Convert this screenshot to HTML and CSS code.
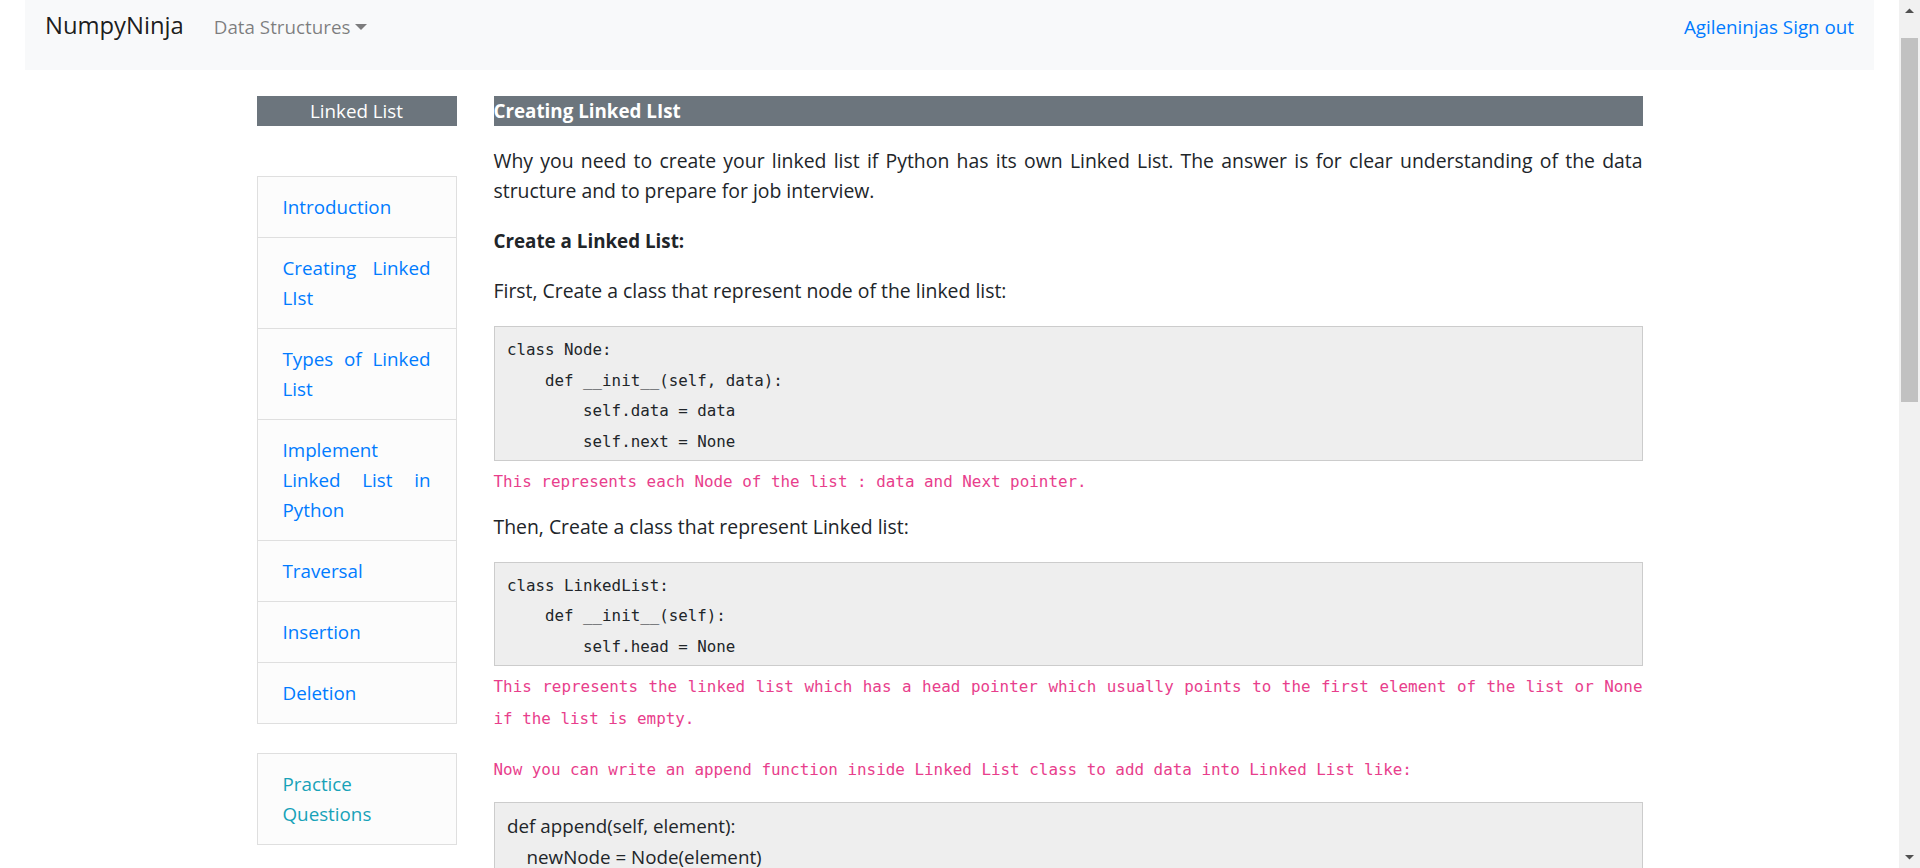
FILE: index.html
```html
<!DOCTYPE html>
<html lang="en">
<head>
<meta charset="utf-8">
<title>Creating Linked LIst</title>
<link rel="stylesheet" href="styles.css">
</head>
<body>
<div class="page">
  <nav class="navbar">
    <a class="brand" href="#">NumpyNinja</a>
    <a class="nav-link" href="#">Data Structures<span class="caret"></span></a>
    <a class="nav-user" href="#">Agileninjas Sign out</a>
  </nav>

  <div class="layout">
    <aside class="sidebar">
      <div class="side-title">Linked List</div>
      <ul class="list-group">
        <li class="list-item"><a href="#">Introduction</a></li>
        <li class="list-item"><a href="#">Creating Linked LIst</a></li>
        <li class="list-item"><a href="#">Types of Linked List</a></li>
        <li class="list-item"><a href="#">Implement Linked List in Python</a></li>
        <li class="list-item"><a href="#">Traversal</a></li>
        <li class="list-item"><a href="#">Insertion</a></li>
        <li class="list-item"><a href="#">Deletion</a></li>
      </ul>
      <ul class="list-group practice">
        <li class="list-item"><a href="#">Practice Questions</a></li>
      </ul>
    </aside>

    <main class="content">
      <h4 class="content-title">Creating Linked LIst</h4>
      <p class="text">Why you need to create your linked list if Python has its own Linked List. The answer is for clear understanding of the data structure and to prepare for job interview.</p>
      <p class="text strong">Create a Linked List:</p>
      <p class="text">First, Create a class that represent node of the linked list:</p>
      <div class="code-box"><div class="ln">class Node:</div><div class="ln">    def __init__(self, data):</div><div class="ln">        self.data = data</div><div class="ln">        self.next = None</div></div>
      <p class="note">This represents each Node of the list : data and Next pointer.</p>
      <p class="text">Then, Create a class that represent Linked list:</p>
      <div class="code-box"><div class="ln">class LinkedList:</div><div class="ln">    def __init__(self):</div><div class="ln">        self.head = None</div></div>
      <p class="note">This represents the linked list which has a head pointer which usually points to the first element of the list or None if the list is empty.</p>
      <p class="note note-lead">Now you can write an append function inside Linked List class to add data into Linked List like:</p>
      <div class="code-box code-prose"><div class="ln">def append(self, element):</div><div class="ln">    newNode = Node(element)</div><div class="ln">    if self.head is None:</div><div class="ln">        self.head = newNode</div><div class="ln">        return</div><div class="ln">    lastNode = self.head</div><div class="ln">    while lastNode.next:</div><div class="ln">        lastNode = lastNode.next</div><div class="ln">    lastNode.next = newNode</div></div>
    </main>
  </div>
</div>

<div class="scrollbar" aria-hidden="true">
  <div class="sb-btn"><svg width="21" height="21" viewBox="0 0 21 21"><path d="M6 13 L10.5 8.5 L15 13 Z" fill="#505050"/></svg></div>
  <div class="sb-gap"></div>
  <div class="sb-thumb"></div>
  <div class="sb-fill"></div>
  <div class="sb-btn"><svg width="21" height="21" viewBox="0 0 21 21"><path d="M6 8 L10.5 12.5 L15 8 Z" fill="#505050"/></svg></div>
</div>
</body>
</html>
```

FILE: styles.css
```css
html {
  overflow: hidden;
}

body {
  margin: 0;
  font-family: "Open Sans", "Noto Sans", sans-serif;
  font-size: 18.8px;
  line-height: 30px;
  color: #212529;
  background: #fff;
}

a {
  text-decoration: none;
}

.page {
  margin-right: 21px;
  padding: 0 25px;
}

/* ---------- navbar ---------- */
.navbar {
  display: flex;
  align-items: baseline;
  height: 70px;
  box-sizing: border-box;
  padding: 6.5px 20px 0;
  background: #f8f9fa;
}

.brand {
  font-size: 23.8px;
  line-height: 37.5px;
  color: rgba(0, 0, 0, 0.9);
  margin-right: 20px;
}

.nav-link {
  padding: 0 10px;
  color: rgba(0, 0, 0, 0.5);
}

.caret {
  display: inline-block;
  margin-left: 5px;
  vertical-align: 4px;
  border-top: 6px solid rgba(0, 0, 0, 0.5);
  border-left: 6px solid transparent;
  border-right: 6px solid transparent;
}

.nav-user {
  margin-left: auto;
  color: #007bff;
}

/* ---------- layout ---------- */
.layout {
  display: flex;
  justify-content: center;
  gap: 37px;
  margin-top: 26px;
}

.sidebar {
  width: 200px;
  flex: none;
}

.side-title {
  background: #6c757d;
  color: #fff;
  text-align: center;
  line-height: 30px;
}

.list-group {
  list-style: none;
  margin: 50px 0 0;
  padding: 0;
}

.list-item {
  border: 1px solid #dfdfdf;
  margin-bottom: -1px;
  padding: 15px 25px;
  background: #fcfcfc;
  text-align: justify;
}

.list-item a {
  color: #007bff;
}

.practice {
  margin-top: 30px;
}

.practice .list-item a {
  color: #17a2b8;
}

/* ---------- content ---------- */
.content {
  width: 1149px;
  flex: none;
}

.content-title {
  margin: 0 0 20px;
  background: #6c757d;
  color: #fff;
  font-size: 18.8px;
  font-weight: 700;
  line-height: 30px;
}

.text {
  margin: 0 0 20px;
  font-size: 19.4px;
  text-align: justify;
}

.strong {
  font-size: 18.8px;
  font-weight: 700;
}

.code-box {
  background: #eeeeee;
  border: 1px solid #cccccc;
  padding: 8px 12.5px 2.5px;
  font-family: "DejaVu Sans Mono", "Liberation Mono", monospace;
  font-size: 15.8px;
  line-height: 30.5px;
  color: #212529;
}

.ln {
  white-space: pre;
}

.code-prose {
  font-family: "Open Sans", "Noto Sans", sans-serif;
  font-size: 18.8px;
  line-height: 30.7px;
}

.note {
  margin: 5.5px 0 14px;
  font-family: "DejaVu Sans Mono", "Liberation Mono", monospace;
  font-size: 15.9px;
  line-height: 31.6px;
  color: #e83e8c;
  text-align: justify;
}

.note-lead {
  margin: 20px 0 16px;
}

/* ---------- scrollbar ---------- */
.scrollbar {
  position: fixed;
  top: 0;
  right: 0;
  width: 21px;
  height: 100vh;
  background: #f1f1f1;
  display: flex;
  flex-direction: column;
}

.sb-btn {
  height: 21px;
  flex: none;
}

.sb-btn svg {
  display: block;
}

.sb-gap {
  height: 17px;
  flex: none;
}

.sb-thumb {
  height: 364px;
  flex: none;
  margin: 0 2px;
  background: #c1c1c1;
}

.sb-fill {
  flex: 1;
}
```
